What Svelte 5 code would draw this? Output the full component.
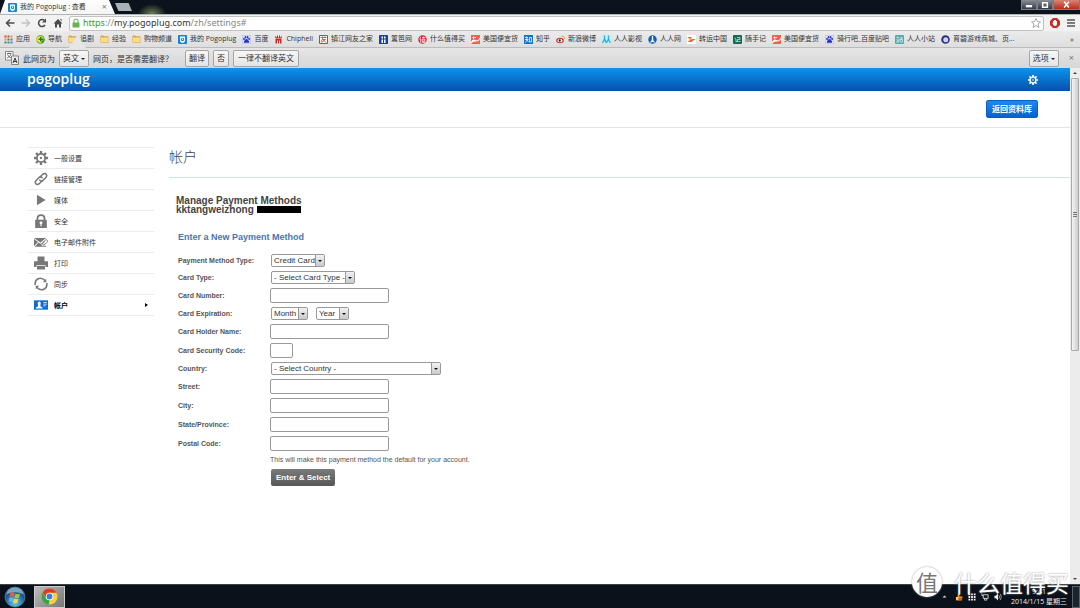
<script lang="ts">
  const folder =
    '<path d="M1 2.5Q1 1 2 1h4l1.5 1.5h8Q17 2.5 17 4v11.5H1z" fill="#d9a33f"/><path d="M2 5h14v9.500H2z" fill="#fbdc8b"/>';
  const paw =
    '<rect width="18" height="18" fill="#e9ecff"/><path d="M.5.5h17v17H.5z" fill="none" stroke="#8b94dd"/><g fill="#2633c8"><ellipse cx="4" cy="8" rx="1.7" ry="2.300"/><ellipse cx="7" cy="4.500" rx="1.700" ry="2.400"/><ellipse cx="11.200" cy="4.500" rx="1.700" ry="2.400"/><ellipse cx="14.200" cy="8" rx="1.700" ry="2.300"/><path d="M9 8c3 0 3 3 5 4.500 1.500 2-1 4-3 3H7c-2 1-4.500-1-3-3C6 11 6 8 9 8z"/></g>';
  const pogo =
    '<rect width="18" height="18" rx="2" fill="#1683d3"/><path d="M4 3h10v8q0 4-5 5-5-1-5-5z" fill="#fff"/><circle cx="9" cy="9" r="3.300" fill="#1683d3"/><circle cx="9" cy="8.500" r="1.300" fill="#fff"/>';
  const deal =
    '<rect width="18" height="18" fill="#ee6453"/><path d="M0 14q4-7 9-4t9-5v3q-3 6-9 5t-9 5z" fill="#fff"/><path d="M3 5h7M5 3v5" stroke="#fff" stroke-width="1.500"/>';

  const bookmarks = [
    {
      name: '应用',
      icon: '<g fill="#d44a3c"><path d="M1 1h4v4H1zM7 1h4v4H7z"/></g><path d="M13 1h4v4h-4zM1 7h4v4H1z" fill="#e99a2e"/><path d="M7 7h4v4H7zM1 13h4v4H1z" fill="#4a8c42"/><path d="M13 7h4v4h-4zM7 13h4v4H7zM13 13h4v4h-4z" fill="#4484c6"/>',
    },
    {
      name: '导航',
      icon: '<circle cx="9" cy="9" r="8.500" fill="#2d9a37"/><path d="M1 6q7-8 15 0L9 17 1 12z" fill="#ffe12a"/><path d="M8 4h3v3h3v3h-3v3H8v-3H5V7h3z" fill="#227d35"/>',
    },
    { name: '追剧', icon: folder },
    { name: '经验', icon: folder },
    { name: '购物频道', icon: folder },
    { name: '我的 Pogoplug', icon: pogo },
    { name: '百度', icon: paw },
    {
      name: 'Chiphell',
      icon: '<path d="M2 2l4 3V1h2v4h2V1h2v4l4-3-1 5H3zM3 8h12v9h-3v-6h-2v6H8v-6H6v6H3z" fill="#c42a2a"/>',
    },
    {
      name: '镇江网友之家',
      icon: '<path d="M1 1h16v16H1z" fill="#fff" stroke="#d2383b" stroke-width="2"/><path d="M3 5h12M7 3v4L4 14M7 9h6l-8 6M8 9l6 6M12 3v3" stroke="#d2383b" stroke-width="1.600" fill="none"/>',
    },
    {
      name: '篱笆网',
      icon: '<rect width="18" height="18" rx="1" fill="#17459c"/><path d="M5 3h3v4H5zM5 9h3v7H5zM10 3h3v4h-3zM10 9h3v7h-3z" fill="#fff"/>',
    },
    {
      name: '什么值得买',
      icon: '<circle cx="9" cy="9" r="8.500" fill="#cc2330"/><path d="M6 3L3 9M5 7v8M8 5h7M11 3v3M8 8h6v5H8zM7 15h8M8 10h6" stroke="#fff" stroke-width="1.300" fill="none"/>',
    },
    { name: '美国便宜货', icon: deal },
    {
      name: '知乎',
      icon: '<rect width="18" height="18" fill="#1674c5"/><path d="M5 3L3 6M3 5h5M2 9h7M6 5v5l-3 5M6 10l3 4M11 5h4v9h-4z" stroke="#fff" stroke-width="1.500" fill="none"/>',
    },
    {
      name: '新浪微博',
      icon: '<ellipse cx="8" cy="11" rx="7.500" ry="5.500" fill="#d6232c"/><ellipse cx="8" cy="11" rx="5" ry="3.700" fill="#fff"/><circle cx="7.500" cy="11" r="2.300" fill="#222"/><path d="M11 2q6-1 6 6" stroke="#f0a12e" stroke-width="2" fill="none"/>',
    },
    {
      name: '人人影视',
      icon: '<rect width="18" height="18" fill="#c8ecfa"/><path d="M5 1v5q0 4-4 10M5 7q1 4 4 9M13 1v5q0 4-4 9M13 7q1 6 4 9" stroke="#2badde" stroke-width="2.500" fill="none"/>',
    },
    {
      name: '人人网',
      icon: '<circle cx="9" cy="9" r="8.500" fill="#1562b5"/><path d="M9 2v7M9 8q0 5-4 7M9 8q0 5 4 7" stroke="#fff" stroke-width="2.500" fill="none"/>',
    },
    {
      name: '转运中国',
      icon: '<rect width="18" height="18" fill="#fff"/><path d="M1 4h9l-2 4h9l-8 6H1l5-4z" fill="#ee6a25"/><path d="M4 8h6" stroke="#fff" stroke-width="1"/>',
    },
    {
      name: '随手记',
      icon: '<rect width="18" height="18" rx="2" fill="#126b55"/><path d="M3 6l3 2v6l3-2M8 5h6v4H9v4h6" stroke="#d8eee5" stroke-width="1.500" fill="none"/>',
    },
    { name: '美国便宜货', icon: deal },
    { name: '骑行吧_百度贴吧', icon: paw },
    {
      name: '人人小站',
      icon: '<rect width="18" height="18" rx="2" fill="#54aaa9"/><path d="M3 5h5M5 3v2M4 8l1 5M8 7l-1 6M2 14h6M12 3v6M12 6h4M10 9h5v5h-5z" stroke="#e4fbfa" stroke-width="1.400" fill="none"/>',
    },
    {
      name: '育碧游戏商城、页...',
      icon: '<circle cx="9" cy="9" r="8.500" fill="#2a2f80"/><circle cx="9.500" cy="9.500" r="5" fill="#cdd2f0"/>',
    },
  ];

  const gear =
    '<circle cx="12" cy="12" r="7" fill="none" stroke="currentColor" stroke-width="3"/><circle cx="12" cy="12" r="2" fill="currentColor"/><path d="M12 0v5M12 19v5M0 12h5M19 12h5M3.500 3.500L7 7M17 17l3.500 3.500M3.500 20.500L7 17M17 7l3.500-3.500" stroke="currentColor" stroke-width="4"/>';

  const menu = [
    { name: '一般设置', icon: gear },
    {
      name: '链接管理',
      icon: '<g fill="none" stroke="currentColor" stroke-width="2.600" stroke-linecap="round"><path d="M10 9l5-5q4-3 6 0t-1 6l-5 5q-3 2-5-1"/><path d="M14 15l-5 5q-4 3-6 0t1-6l5-5q3-2 5 1"/></g>',
    },
    { name: '媒体', icon: '<path d="M5 3l15 9-15 9z" fill="currentColor"/>' },
    {
      name: '安全',
      icon: '<path d="M6 11V7q0-5 6-5t6 5v4" fill="none" stroke="currentColor" stroke-width="3"/><rect x="2" y="10" width="20" height="14" rx="1" fill="currentColor"/><path d="M12 13a2 2 0 0 1 1 4v4h-2v-4a2 2 0 0 1 1-4z" fill="#fff"/>',
    },
    {
      name: '电子邮件附件',
      icon: '<path d="M0 5h21l-10 8zM0 7l7 5-7 7zM1 20l7-7 3 2 4-2 6 7z" fill="currentColor"/><path d="M14 14l5-5q3-2 4 0t-1 4l-5 4q-3 1-3-1t5-5" fill="none" stroke="#fff" stroke-width="3"/><path d="M14 14l5-5q3-2 4 0t-1 4l-5 4q-3 1-3-1t5-5" fill="none" stroke="currentColor" stroke-width="1.500"/>',
    },
    {
      name: '打印',
      icon: '<path d="M6 1h12v8H6zM0 9h24v10h-4v-3H4v3H0zM5 17h14v6H5z" fill="currentColor"/>',
    },
    {
      name: '同步',
      icon: '<g fill="none" stroke="currentColor" stroke-width="2.600"><path d="M2 14Q1 6 7 3t12 3"/><path d="M22 10q1 8-5 11T5 18"/></g><path d="M21 3v6h-6zM3 21v-6h6z" fill="currentColor"/>',
    },
    {
      name: '帐户',
      active: true,
      icon: '<path d="M0 4h24v16H0z" fill="#0a6cd6"/><path d="M3 18q0-3 4-4v-2q-2-5 2-6 4 1 2 6v2q4 1 4 4zM16 7h6v1h-6zM16 10h6v1h-6zM16 13h4v1h-4z" fill="#fff"/>',
    },
  ];

  const fields = [
    { id: 'method', label: 'Payment Method Type:', selects: [{ value: 'Credit Card', size: 'credit' }] },
    { id: 'type', label: 'Card Type:', selects: [{ value: '- Select Card Type -', size: 'type' }] },
    { id: 'number', label: 'Card Number:' },
    {
      id: 'expiration',
      label: 'Card Expiration:',
      selects: [
        { value: 'Month', size: 'month' },
        { value: 'Year', size: 'year' },
      ],
    },
    { id: 'holder', label: 'Card Holder Name:' },
    { id: 'security', label: 'Card Security Code:', short: true },
    { id: 'country', label: 'Country:', selects: [{ value: '- Select Country -', size: 'country' }] },
    { id: 'street', label: 'Street:' },
    { id: 'city', label: 'City:' },
    { id: 'state', label: 'State/Province:' },
    { id: 'postal', label: 'Postal Code:' },
  ];
</script>

<div class="app">
  <header class="titlebar">
    <div class="tab">
      <svg class="fav" viewBox="0 0 18 18">{@html pogo}</svg>
      <span class="tab-title">我的 Pogoplug : 查看</span>
      <button class="plain" aria-label="Close tab">×</button>
    </div>
    <button class="new-tab" aria-label="New tab"></button>
    <div class="glow"></div>
    <div class="window-controls">
      <button aria-label="Minimize"><svg viewBox="0 0 18 10"><path d="M5 5h8v3H5z" fill="#fff" /></svg></button>
      <button aria-label="Restore"><svg viewBox="0 0 18 10"><path d="M6 2h6v6H6z" fill="none" stroke="#fff" stroke-width="2" /></svg></button>
      <button class="close" aria-label="Close"><svg viewBox="0 0 18 10"><path d="M6 1l6 7M12 1L6 8" stroke="#fff" stroke-width="2" /></svg></button>
    </div>
  </header>

  <div class="toolbar">
    <button class="tool" aria-label="Back"><svg viewBox="0 0 20 20"><path d="M19 10H3M10 3l-7 7 7 7" fill="none" stroke="#4b4b4b" stroke-width="3" /></svg></button>
    <button class="tool" aria-label="Forward"><svg viewBox="0 0 20 20"><path d="M1 10h16M10 3l7 7-7 7" fill="none" stroke="#c4c4c4" stroke-width="3" /></svg></button>
    <button class="tool" aria-label="Reload"><svg viewBox="0 0 20 20"><path d="M16 14a7 7 0 1 1-1-9" fill="none" stroke="#4b4b4b" stroke-width="3" /><path d="M18 1v8h-8z" fill="#4b4b4b" /></svg></button>
    <button class="tool" aria-label="Home"><svg viewBox="0 0 20 20"><path d="M10 2l9 9h-3v8h-4v-6H8v6H4v-8H1zM14 2h3v5z" fill="#4b4b4b" /></svg></button>
    <div class="omnibox">
      <svg class="lock" viewBox="0 0 16 20"><path d="M4 10V6q0-4 4-4t4 4v4" fill="none" stroke="#8bbd72" stroke-width="2.500" /><rect x="1" y="9" width="14" height="10" rx="1" fill="#6cb34f" /></svg>
      <span class="url"><span class="secure">https</span><span class="dim">://</span>my.pogoplug.com<span class="dim">/zh/settings#</span></span>
      <svg class="star" viewBox="0 0 20 20"><path d="M10 1l3 6 6 1-5 4 2 7-6-4-6 4 2-7-5-4 6-1z" fill="#fff" stroke="#8d8d8d" stroke-width="1.500" /></svg>
    </div>
    <button class="tool" aria-label="Block ads"><svg viewBox="0 0 20 20"><path d="M6 0h8l6 6v8l-6 6H6l-6-6V6z" fill="#c92b25" /><path d="M6 9V6h2V4h4v2h2v6q0 4-4 4-3 0-5-5z" fill="#fff" /></svg></button>
    <button class="tool" aria-label="Menu"><svg viewBox="0 0 20 20"><path d="M2 4h16M2 10h16M2 16h16" stroke="#555" stroke-width="3" /></svg></button>
  </div>

  <nav class="bookmarks">
    {#each bookmarks as bookmark}
      <a class="bookmark" href="#bookmark">
        <svg class="fav" viewBox="0 0 18 18">{@html bookmark.icon}</svg>
        {bookmark.name}
      </a>
    {/each}
    <span class="more">»</span>
  </nav>

  <div class="translate">
    <svg class="translate-icon" viewBox="0 0 28 28">
      <path d="M1 1h15v17H1z" fill="#fff" stroke="#666" stroke-width="1.500" />
      <path d="M4 5h9M8 3v2M12 6q-2 6-8 8M5 7q2 5 7 7" stroke="#444" stroke-width="1.500" fill="none" />
      <path d="M13 10h14v17H13z" fill="#eee" stroke="#666" stroke-width="1.500" />
      <path d="M16 24l4-10 4 10M17 21h6" stroke="#333" stroke-width="2" fill="none" />
    </svg>
    <span>此网页为</span>
    <button class="chip">英文<i class="caret"></i></button>
    <span class="question">网页，是否需要翻译？</span>
    <button class="chip">翻译</button>
    <button class="chip">否</button>
    <button class="chip never">一律不翻译英文</button>
    <button class="chip options">选项<i class="caret"></i></button>
    <button class="plain" aria-label="Dismiss">×</button>
    <i class="pointer"></i>
  </div>

  <div class="viewport">
    <div class="page">
      <div class="brand-bar">
        <a class="logo" href="#home">p<span class="eye">o</span>goplug</a>
        <svg class="brand-gear" viewBox="0 0 24 24">{@html gear}</svg>
      </div>
      <div class="actions"><button class="library">返回资料库</button></div>

      <div class="columns">
        <nav class="menu">
          {#each menu as item}
            <a class="menu-item" class:active={item.active} href="#settings">
              <svg class="menu-icon" viewBox="0 0 24 24">{@html item.icon}</svg>
              {item.name}
            </a>
          {/each}
        </nav>

        <main class="content">
          <h1>帐户</h1>
          <h2>Manage Payment Methods<br />kktangweizhong <span class="redacted"></span></h2>
          <form onsubmit={(e) => e.preventDefault()}>
            <h3>Enter a New Payment Method</h3>
            {#each fields as field}
              <div class="row">
                <label for={field.id}>{field.label}</label>
                {#if field.selects}
                  {#each field.selects as select, i}
                    <span class="select {select.size}">
                      <select id={i === 0 ? field.id : `${field.id}-${i}`} aria-label={field.label}>
                        <option>{select.value}</option>
                      </select>
                    </span>
                  {/each}
                {:else}
                  <input id={field.id} type="text" class:short={field.short} />
                {/if}
              </div>
            {/each}
            <p class="note">This will make this payment method the default for your account.</p>
            <button class="submit">Enter &amp; Select</button>
          </form>
        </main>
      </div>
    </div>

    <div class="scrollbar">
      <i class="arrow up"></i>
      <div class="thumb"></div>
      <i class="arrow"></i>
    </div>
  </div>

  <footer class="taskbar">
    <button class="start" aria-label="Start">
      <svg viewBox="0 0 44 44">
        <defs>
          <radialGradient id="orb" cy=".8"><stop offset="0" stop-color="#5fd3ee" /><stop offset="1" stop-color="#20588d" /></radialGradient>
        </defs>
        <circle cx="22" cy="22" r="20" fill="url(#orb)" stroke="#7aa6c4" />
        <path d="M4 17q18-9 36 0Q36 3 22 3T4 17z" fill="#b7d5e6" opacity=".6" />
        <path d="M13 14q4-3 8 0l-2 8q-4-3-8 0z" fill="#ee6033" />
        <path d="M23 15q4 3 9 0l-2 8q-5 3-9 0z" fill="#9bcb3c" />
        <path d="M11 24q4-3 8 0l-2 8q-4-3-8 0z" fill="#5fb5ec" />
        <path d="M20 25q5 3 9 0l-2 8q-4 3-9 0z" fill="#fdd13e" />
      </svg>
    </button>
    <button class="task" aria-label="Chrome">
      <svg viewBox="0 0 32 32">
        <circle cx="16" cy="16" r="15" fill="#f8d03b" />
        <path d="M3 8.500A15 15 0 0 1 29.500 9H16l-6.500 10z" fill="#dc3c2c" />
        <path d="M3 8.500L9.500 20 16 23l-1.500 8A15 15 0 0 1 3 8.500z" fill="#37a14c" />
        <circle cx="16" cy="16" r="7" fill="#fff" /><circle cx="16" cy="16" r="5.500" fill="#3b7fd0" />
      </svg>
    </button>
    <div class="tray">
      <svg class="expand" viewBox="0 0 10 10"><path d="M1 7l4-4 4 4z" fill="#ddd" /></svg>
      <svg viewBox="0 0 18 18"><path d="M2 9h4V3l4-2v7h7l-2 9H3z" fill="#f09a28" /><path d="M8 11h8v5H8z" fill="#e64a1f" /><path d="M2 9h4v7H3z" fill="#ffe25b" /></svg>
      <svg viewBox="0 0 18 18"><path d="M1 1h4v4H1zM7 1h4v4H7zM13 1h4v4h-4zM1 7h4v4H1zM7 7h4v4H7zM13 7h4v4h-4zM1 13h4v4H1zM7 13h4v4H7zM13 13h4v4h-4z" fill="#eee" /></svg>
      <svg viewBox="0 0 18 18"><path d="M5 4h11v8H5zM2 1v5h3M8 12v4h5v-4" fill="none" stroke="#ddd" stroke-width="2" /></svg>
      <svg viewBox="0 0 18 18"><path d="M1 6h3l5-5v16l-5-5H1z" fill="#eee" /><path d="M11 5q3 4 0 8M14 2q5 7 0 14" fill="none" stroke="#ddd" stroke-width="1.500" /></svg>
      <div class="clock"><span>9:41</span><span>2014/1/15 星期三</span></div>
      <div class="desktop"></div>
    </div>
  </footer>

  <div class="watermark"><span class="seal">值</span><span>什么值得买</span></div>
</div>

<style>
  :global(body) {
    margin: 0;
    font-family: 'Open Sans', 'Noto Sans CJK SC', sans-serif;
    background: #fff;
    color: #333;
  }

  .app {
    position: relative;
    display: flex;
    flex-direction: column;
    min-height: 100vh;
    overflow: hidden;
    font-size: 7px;
  }

  button,
  input,
  select {
    box-sizing: border-box;
    margin: 0;
    padding: 0;
    border: 0;
    background: none;
    font: inherit;
    color: inherit;
  }

  a {
    color: inherit;
    text-decoration: none;
  }

  svg {
    display: block;
    flex-shrink: 0;
  }

  .fav {
    width: 9px;
    height: 9px;
  }

  .plain {
    color: #777;
    font-size: 9px;
    line-height: 12px;
  }

  .titlebar {
    display: flex;
    height: 14px;
    background: #0d131c;
  }

  .tab {
    display: flex;
    align-items: center;
    gap: 3px;
    box-sizing: border-box;
    width: 115px;
    padding: 0 8px;
    background: linear-gradient(#fff, #f4f4f4);
    clip-path: polygon(5px 0, 109px 0, 115px 100%, 0 100%);
  }

  .tab-title {
    flex: 1;
    line-height: 12px;
    white-space: nowrap;
  }

  .new-tab {
    width: 17px;
    height: 8px;
    margin-top: 3px;
    background: #a9b0b4;
    clip-path: polygon(0 0, 80% 0, 100% 100%, 20% 100%);
  }

  .glow {
    width: 40px;
    background: radial-gradient(ellipse at 50% 100%, #6f7f58, transparent 50%);
  }

  .window-controls {
    display: flex;
    height: 10px;
    margin-left: auto;
  }

  .window-controls button {
    width: 16px;
    background: linear-gradient(#8a8f96, #343b45);
    border: 1px solid #787f87;
    border-top: 0;
  }

  .window-controls .close {
    width: 27px;
    background: linear-gradient(#d98576, #b62d18);
  }

  .window-controls svg {
    width: 100%;
    height: 8px;
  }

  .toolbar {
    display: flex;
    align-items: center;
    gap: 6px;
    height: 17px;
    padding: 0 4px 0 5px;
    border-top: 1px solid #b5b5b5;
    box-sizing: border-box;
    background: #f2f2f2;
  }

  .tool svg {
    width: 10px;
    height: 10px;
  }

  .omnibox {
    display: flex;
    flex: 1;
    align-items: center;
    gap: 3px;
    height: 15px;
    padding: 0 2px;
    background: #fff;
    border: 1px solid #c2c2c2;
    box-sizing: border-box;
    border-radius: 2px;
  }

  .lock {
    width: 8px;
    height: 10px;
  }

  .url {
    flex: 1;
    font-family: 'Noto Sans', sans-serif;
    font-size: 9px;
    line-height: 12px;
  }

  .secure {
    color: #3f9a2c;
  }

  .dim {
    color: #888;
  }

  .star {
    width: 10px;
    height: 10px;
  }

  .bookmarks {
    display: flex;
    align-items: center;
    gap: 6px;
    box-sizing: border-box;
    height: 17px;
    padding: 0 6px 0 4px;
    background: linear-gradient(#ebebeb, #dedede);
    border-bottom: 1px solid #bbb;
    white-space: nowrap;
  }

  .bookmark {
    display: flex;
    align-items: center;
    gap: 3px;
    line-height: 12px;
  }

  .more {
    margin-left: auto;
    font-size: 8px;
    line-height: 12px;
  }

  .translate {
    position: relative;
    display: flex;
    align-items: center;
    gap: 4px;
    box-sizing: border-box;
    height: 20px;
    padding: 0 6px 0 5px;
    background: linear-gradient(#e6e6e6, #d6d6d6);
    font-size: 8px;
    white-space: nowrap;
  }

  /* notch of the info bar, lies over the bookmarks */
  .pointer {
    position: absolute;
    bottom: 100%;
    left: 69px;
    width: 17px;
    height: 13px;
    background: #e6e6e6;
    clip-path: polygon(50% 0, 100% 100%, 0 100%);
  }

  .translate-icon {
    width: 14px;
    height: 14px;
  }

  .chip {
    height: 17px;
    padding: 0 3px;
    background: linear-gradient(#f7f7f7, #e4e4e4);
    border: 1px solid #a5a5a5;
    border-radius: 2px;
    line-height: 12px;
  }

  .question {
    margin-right: 8px;
  }

  .never {
    padding: 0 4px;
  }

  .caret {
    display: inline-block;
    margin-left: 2px;
    border: 2px solid transparent;
    border-top-color: #222;
    border-bottom: 0;
    vertical-align: middle;
  }

  .options {
    margin-left: auto;
    margin-right: 6px;
  }

  .viewport {
    display: flex;
    flex: 1;
  }

  .page {
    flex: 1;
    background: #fff;
  }

  .brand-bar {
    display: flex;
    align-items: center;
    justify-content: space-between;
    height: 23px;
    padding: 0 32px 0 27px;
    background: linear-gradient(#0c94ec, #0650ab);
    color: #fff;
  }

  .logo {
    padding-bottom: 2px;
    font-size: 14px;
    font-weight: 600;
    line-height: 16px;
  }

  .eye {
    position: relative;
  }

  .eye::after {
    content: '';
    position: absolute;
    top: 10px;
    left: 3px;
    width: 3px;
    height: 1px;
    background: #fff;
  }

  .brand-gear {
    width: 10px;
    height: 10px;
  }

  .actions {
    display: flex;
    align-items: center;
    justify-content: flex-end;
    height: 36px;
    padding: 0 32px;
    border-bottom: 1px solid #e3e3e3;
  }

  .library {
    height: 18px;
    padding: 0 5px;
    background: linear-gradient(#2188e8, #0562d6);
    border: 1px solid #0a60c4;
    border-radius: 2px;
    color: #fff;
    font-weight: 700;
    font-size: 8px;
    line-height: 12px;
  }

  .columns {
    display: flex;
    gap: 15px;
    padding: 19px 0 0 28px;
  }

  .menu {
    width: 126px;
    border-top: 1px solid #ececec;
  }

  .menu-item {
    display: flex;
    align-items: center;
    gap: 6px;
    height: 20px;
    padding: 0 6px;
    border-bottom: 1px solid #ececec;
    color: #333;
  }

  .menu-icon {
    width: 14px;
    height: 14px;
    color: #777;
  }

  .active {
    color: #000;
    font-weight: 700;
  }

  .active::after {
    content: '';
    margin-left: auto;
    border: 2px solid transparent;
    border-left: 3px solid #000;
    border-right: 0;
  }

  .content {
    flex: 1;
    font-family: 'Liberation Sans', Arial, sans-serif;
  }

  h1,
  h2,
  h3,
  p {
    margin: 0;
  }

  h1 {
    height: 30px;
    border-bottom: 1px solid #cfe3ec;
    color: #3a4250;
    font-family: 'Noto Sans CJK SC', sans-serif;
    font-size: 14px;
    font-weight: 300;
    line-height: 18px;
  }

  h2 {
    padding: 18px 0 0 7px;
    color: #444;
    font-size: 10px;
    line-height: 9px;
  }

  .redacted {
    display: inline-block;
    width: 44px;
    height: 7px;
    background: #000;
  }

  form {
    display: flex;
    flex-direction: column;
    align-items: flex-start;
    gap: 4px;
    padding: 17px 0 0 9px;
  }

  h3 {
    margin-bottom: 7px;
    color: #4a74b4;
    font-size: 9px;
    line-height: 12px;
  }

  .row {
    display: flex;
    align-items: center;
  }

  label {
    width: 93px;
    color: #555;
    font-weight: 700;
    line-height: 12px;
  }

  input {
    width: 119px;
    height: 15px;
    margin-left: -1px;
    background: #fff;
    border: 1px solid #999;
    border-radius: 2px;
  }

  .short {
    width: 23px;
  }

  .select {
    position: relative;
    margin-right: 8px;
  }

  .select select {
    display: block;
    width: 100%;
    height: 13px;
    padding-left: 2px;
    appearance: none;
    background: #fff;
    border: 1px solid #999;
    border-radius: 2px;
    font-size: 8px;
    line-height: 11px;
  }

  .select::before {
    content: '';
    position: absolute;
    top: 1px;
    right: 1px;
    width: 8px;
    height: 11px;
    background: linear-gradient(#f2f2f2, #c9c9c9);
    border-left: 1px solid #999;
    pointer-events: none;
  }

  .select::after {
    content: '';
    position: absolute;
    top: 6px;
    right: 3px;
    border: 2px solid transparent;
    border-top-color: #111;
    border-bottom: 0;
    pointer-events: none;
  }

  .credit {
    width: 54px;
  }

  .type {
    width: 84px;
  }

  .month {
    width: 37px;
  }

  .year {
    width: 33px;
  }

  .country {
    width: 170px;
  }

  .note {
    padding-left: 92px;
    color: #555;
    line-height: 10px;
  }

  .submit {
    height: 17px;
    margin-left: 93px;
    padding: 0 5px;
    background: linear-gradient(#7a7a7a, #575757);
    border-radius: 2px;
    color: #fff;
    font-size: 8px;
    font-weight: 700;
  }

  .scrollbar {
    display: flex;
    flex-direction: column;
    align-items: center;
    width: 10px;
    background: #ececec;
  }

  .arrow {
    margin: 4px 0;
    border: 2px solid transparent;
    border-top-color: #444;
    border-bottom: 0;
  }

  .up {
    transform: rotate(180deg);
  }

  .thumb {
    display: grid;
    place-items: center;
    box-sizing: border-box;
    width: 8px;
    height: 53%;
    margin-bottom: auto;
    background: linear-gradient(90deg, #f4f4f4, #cdcdcd);
    border: 1px solid #aaa;
    border-radius: 1px;
  }

  .thumb::after {
    content: '';
    width: 4px;
    height: 5px;
    background: repeating-linear-gradient(#777 0 1px, transparent 1px 2px);
  }

  .taskbar {
    display: flex;
    align-items: center;
    box-sizing: border-box;
    height: 24px;
    padding-left: 4px;
    background: #0b111a;
    border-top: 1px solid #3a4442;
    color: #eee;
  }

  .start svg {
    width: 22px;
    height: 22px;
  }

  .task {
    display: flex;
    align-items: center;
    justify-content: center;
    width: 31px;
    height: 22px;
    margin-left: 8px;
    background: linear-gradient(135deg, #bbb, #777);
    border: 1px solid #ccc;
  }

  .task svg {
    width: 17px;
    height: 17px;
  }

  .tray {
    display: flex;
    align-items: center;
    gap: 5px;
    height: 100%;
    margin-left: auto;
  }

  .tray svg {
    width: 8px;
    height: 8px;
  }

  .tray .expand {
    width: 5px;
    height: 5px;
    margin-right: 3px;
  }

  .clock {
    display: flex;
    flex-direction: column;
    align-items: center;
    margin-left: 4px;
    line-height: 10px;
  }

  .desktop {
    width: 6px;
    height: 20px;
    background: #1c232c;
    border: 1px solid #59616a;
  }

  .watermark {
    position: absolute;
    right: 11px;
    bottom: 11px;
    display: flex;
    align-items: center;
    gap: 12px;
    color: #fff;
    font-family: 'Noto Sans CJK SC', sans-serif;
    font-size: 23px;
    line-height: 30px;
    text-shadow: 0 0 2px #888;
    pointer-events: none;
  }

  .seal {
    width: 30px;
    height: 30px;
    background: #fff;
    border-radius: 50%;
    box-shadow: 0 0 2px #999;
    color: #777;
    font-size: 22px;
    line-height: 28px;
    text-align: center;
    text-shadow: none;
  }
</style>
